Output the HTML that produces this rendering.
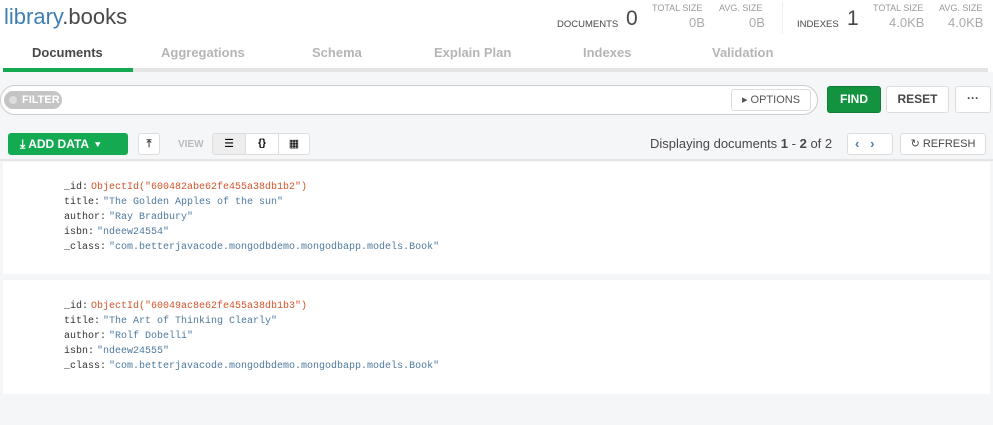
<!DOCTYPE html>
<html><head><style>
*{box-sizing:border-box;margin:0;padding:0}
body{width:993px;height:425px;background:#f5f6f7;font-family:"Liberation Sans",sans-serif;position:relative;overflow:hidden}
.a{position:absolute}
.hdr{left:0;top:0;width:993px;height:72px;background:#fff}
.title{left:4px;top:4px;font-size:22px;color:#494747}
.title span{color:#3d7fb5}
.lbl{font-size:9px;color:#999;letter-spacing:0}
.big{font-size:21px;color:#494747;font-weight:300}
.tab{top:45px;font-size:13px;font-weight:bold;color:#b5b5b5}
.mono{font-family:"Liberation Mono",monospace;font-size:10px;line-height:15px;color:#333}
.k{color:#333}.o{color:#d2552c;margin-left:3px}.s{color:#4f7a9e;margin-left:3px}
.card{left:3px;width:987px;background:#fff}
.btn{border:1px solid #ddd;background:#fff;border-radius:3px;font-size:12px;font-weight:bold;color:#494747;text-align:center}
</style></head><body>
<div class="a hdr"></div>
<div class="a title"><span>library</span>.books</div>
<div class="a lbl" style="left:557px;top:19px;font-size:9.5px;color:#494747">DOCUMENTS</div>
<div class="a big" style="left:626px;top:7px">0</div>
<div class="a lbl" style="left:652px;top:3px">TOTAL SIZE</div>
<div class="a" style="left:689px;top:15px;font-size:13px;color:#aaa">0B</div>
<div class="a lbl" style="left:719px;top:3px">AVG. SIZE</div>
<div class="a" style="left:749px;top:15px;font-size:13px;color:#aaa">0B</div>
<div class="a" style="left:782px;top:2px;width:1px;height:32px;background:#eee"></div>
<div class="a lbl" style="left:797px;top:19px;font-size:9.5px;color:#494747">INDEXES</div>
<div class="a big" style="left:847px;top:7px">1</div>
<div class="a lbl" style="left:873px;top:3px">TOTAL SIZE</div>
<div class="a" style="left:889px;top:15px;font-size:13px;color:#aaa">4.0KB</div>
<div class="a lbl" style="left:939px;top:3px">AVG. SIZE</div>
<div class="a" style="left:948px;top:15px;font-size:13px;color:#aaa">4.0KB</div>
<div class="a tab" style="left:32px;color:#494747">Documents</div>
<div class="a tab" style="left:161px">Aggregations</div>
<div class="a tab" style="left:312px">Schema</div>
<div class="a tab" style="left:434px">Explain Plan</div>
<div class="a tab" style="left:583px">Indexes</div>
<div class="a tab" style="left:712px">Validation</div>
<div class="a" style="left:3px;top:68px;width:985px;height:4px;background:#e4e4e4"></div>
<div class="a" style="left:3px;top:68px;width:130px;height:4px;background:#13aa52"></div>
<div class="a" style="left:0;top:85px;width:818px;height:30px;background:#fff;border:1px solid #ccc;border-radius:15px"></div>
<div class="a" style="left:4px;top:91px;width:58px;height:18px;background:#c4c4c4;border-radius:9px;color:#fff;font-size:11px;font-weight:bold;line-height:18px;padding-left:18px">FILTER</div>
<div class="a" style="left:9px;top:96px;width:8px;height:8px;border-radius:50%;background:#ddd"></div>
<div class="a btn" style="left:731px;top:89px;width:80px;height:22px;font-weight:normal;font-size:11px;line-height:20px;color:#555">▸ OPTIONS</div>
<div class="a btn" style="left:827px;top:86px;width:54px;height:27px;background:#13933f;border-color:#0f7d35;color:#fff;line-height:25px">FIND</div>
<div class="a btn" style="left:886px;top:86px;width:63px;height:27px;line-height:25px">RESET</div>
<div class="a btn" style="left:955px;top:86px;width:36px;height:27px;line-height:23px">···</div>
<div class="a" style="left:8px;top:133px;width:120px;height:22px;background:#13aa52;border-radius:3px;color:#fff;font-size:12px;font-weight:bold;line-height:22px;padding-left:12px">⤓ ADD DATA &nbsp;▾</div>
<div class="a btn" style="left:138px;top:133px;width:22px;height:22px;line-height:20px;font-size:11px">⤒</div>
<div class="a" style="left:178px;top:139px;font-size:10px;font-weight:bold;color:#bbb">VIEW</div>
<div class="a" style="left:212px;top:133px;width:98px;height:22px;border:1px solid #ddd;border-radius:3px;background:#fff"></div>
<div class="a" style="left:213px;top:134px;width:32px;height:20px;background:#eee;font-size:11px;text-align:center;line-height:20px">☰</div>
<div class="a" style="left:245px;top:134px;width:1px;height:20px;background:#ddd"></div>
<div class="a" style="left:246px;top:134px;width:32px;height:20px;font-size:10px;text-align:center;line-height:20px;font-weight:bold">{}</div>
<div class="a" style="left:278px;top:134px;width:1px;height:20px;background:#ddd"></div>
<div class="a" style="left:279px;top:134px;width:30px;height:20px;font-size:11px;text-align:center;line-height:20px">▦</div>
<div class="a" style="left:650px;top:136px;font-size:13px;color:#494747">Displaying documents <b>1</b> - <b>2</b> of 2</div>
<div class="a" style="left:847px;top:133px;width:46px;height:22px;border:1px solid #ddd;border-radius:3px;background:#fff;color:#3d7fb5;font-size:13px;font-weight:bold;line-height:20px;padding-left:7px">‹ &nbsp; ›</div>
<div class="a btn" style="left:900px;top:133px;width:86px;height:22px;line-height:20px;font-weight:normal;font-size:11px">↻ REFRESH</div>
<div class="a" style="left:0;top:159px;width:993px;height:2px;background:#e6e6e6"></div>
<div class="a card" style="top:162px;height:112px"></div>
<div class="a mono" style="left:64px;top:180px">
<div>_id:<span class="o">ObjectId("600482abe62fe455a38db1b2")</span></div>
<div>title:<span class="s">"The Golden Apples of the sun"</span></div>
<div>author:<span class="s">"Ray Bradbury"</span></div>
<div>isbn:<span class="s">"ndeew24554"</span></div>
<div>_class:<span class="s">"com.betterjavacode.mongodbdemo.mongodbapp.models.Book"</span></div>
</div>
<div class="a card" style="top:280px;height:114px"></div>
<div class="a mono" style="left:64px;top:299px">
<div>_id:<span class="o">ObjectId("60049ac8e62fe455a38db1b3")</span></div>
<div>title:<span class="s">"The Art of Thinking Clearly"</span></div>
<div>author:<span class="s">"Rolf Dobelli"</span></div>
<div>isbn:<span class="s">"ndeew24555"</span></div>
<div>_class:<span class="s">"com.betterjavacode.mongodbdemo.mongodbapp.models.Book"</span></div>
</div>
</body></html>
